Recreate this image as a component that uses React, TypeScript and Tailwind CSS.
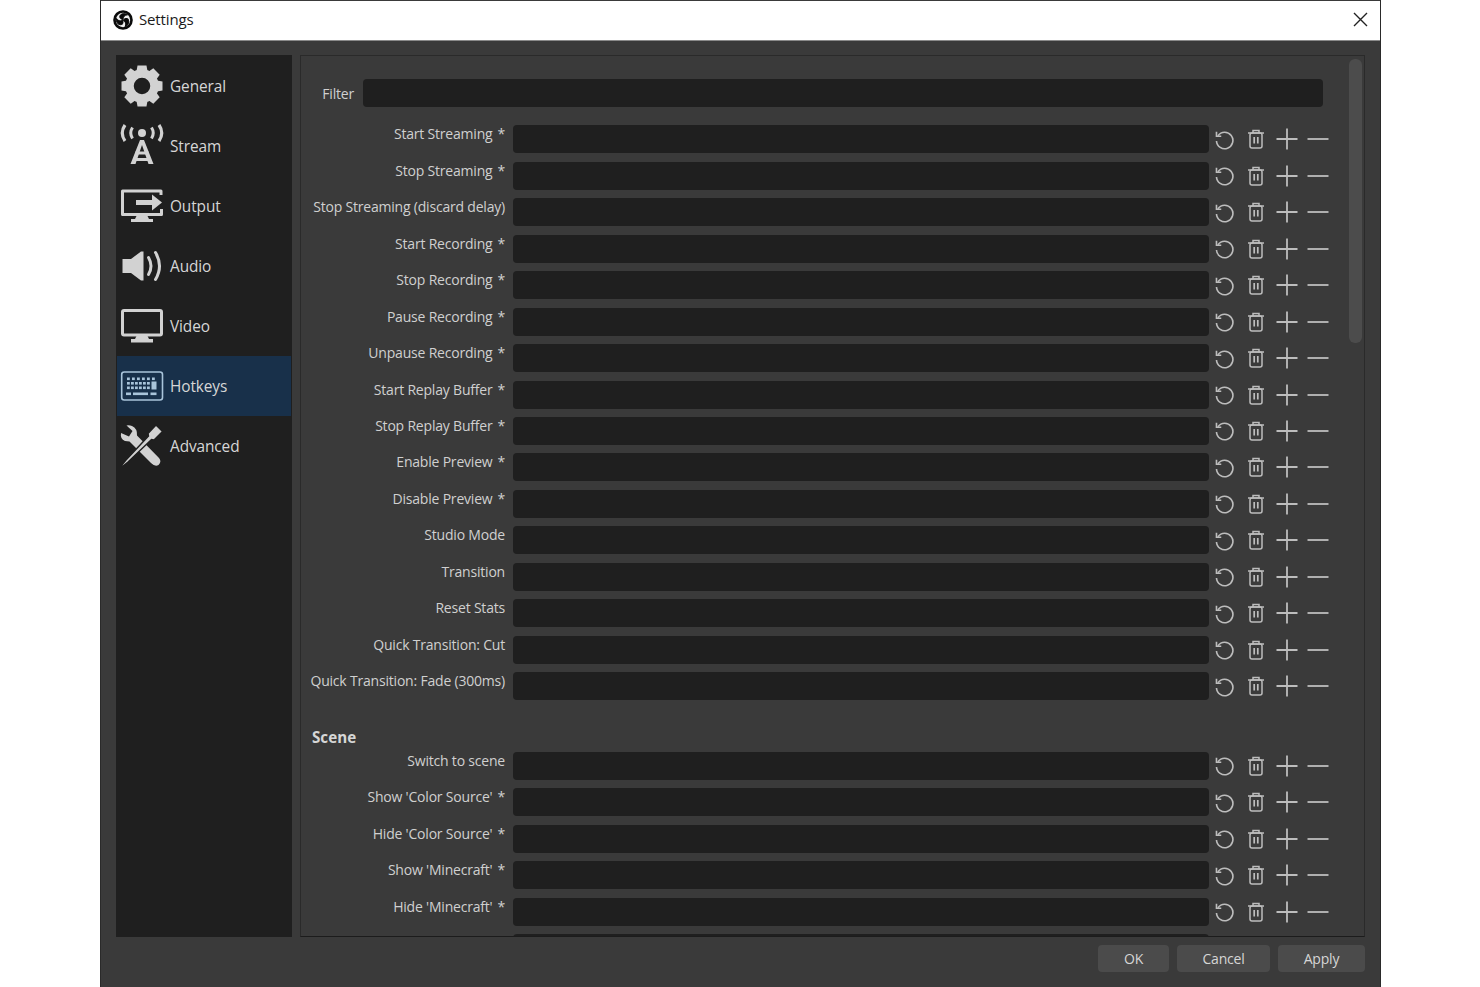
import React from "react";

const font = "font-['Open_Sans','Noto_Sans',sans-serif]";

function Gear() {
  const teeth = [0, 45, 90, 135, 180, 225, 270, 315];
  return (
    <svg width="44" height="44" viewBox="0 0 44 44" fill="#d2d2d2">
      {teeth.map((a) => (
        <path key={a} d="M17.5 1.5 H26.5 L28 10 H16 Z" transform={`rotate(${a} 22 22)`} />
      ))}
      <circle cx="22" cy="22" r="12.5" fill="none" stroke="#d2d2d2" strokeWidth="8.5" />
    </svg>
  );
}

function Stream() {
  return (
    <svg width="44" height="44" viewBox="0 0 44 44" fill="none" stroke="#d2d2d2" strokeWidth="3">
      <circle cx="22" cy="9" r="4" fill="#d2d2d2" stroke="none" />
      <path d="M12.5 3.5 Q9 9 12.5 14.5" />
      <path d="M31.5 3.5 Q35 9 31.5 14.5" />
      <path d="M5 1 Q-0.5 9 5 17" strokeWidth="3.2" />
      <path d="M39 1 Q44.5 9 39 17" strokeWidth="3.2" />
      <path d="M20 16 H24 L33.5 40 H28.5 L22 21 L15.5 40 H10.5 Z" fill="#d2d2d2" stroke="none" />
      <path d="M15.5 29 H28.5 M13 35.5 H31" strokeWidth="3" />
    </svg>
  );
}

function Output() {
  return (
    <svg width="44" height="36" viewBox="0 0 44 36" fill="none" stroke="#d2d2d2" strokeWidth="3">
      <path d="M41 7 V3 H2.5 V26.5 H41.5 V21" strokeLinejoin="round" />
      <path d="M16 12 H32 V6.5 L42 14.5 L32 22.5 V17 H16 Z" fill="#d2d2d2" stroke="none" />
      <path d="M17 27 H27 L29 31 H33 V34 H11 V31 H15 Z" fill="#d2d2d2" stroke="none" />
    </svg>
  );
}

function Audio() {
  return (
    <svg width="44" height="32" viewBox="0 0 44 32" fill="none" stroke="#d2d2d2" strokeWidth="3">
      <path d="M2.5 9 H11 L21 1.5 H23.5 V30.5 H21 L11 23 H2.5 Z" fill="#d2d2d2" stroke="none" />
      <path d="M28.5 7.5 Q33.5 16 28.5 24.5" strokeLinecap="round" />
      <path d="M35.5 2.5 Q43.5 16 35.5 29.5" strokeLinecap="round" />
    </svg>
  );
}

function Video() {
  return (
    <svg width="44" height="36" viewBox="0 0 44 36" fill="none" stroke="#d2d2d2" strokeWidth="3">
      <rect x="2.5" y="2.5" width="39" height="24.5" rx="1.5" />
      <path d="M17 27 H27 L29 31 H33 V34.5 H11 V31 H15 Z" fill="#d2d2d2" stroke="none" />
    </svg>
  );
}

function Keyboard() {
  const c = "#a9c4da";
  const rows = [
    { y: 6.5, xs: [7, 12, 17, 22, 27, 32] },
    { y: 11, xs: [7, 11, 15, 19, 23, 27] },
    { y: 15.5, xs: [7, 11, 15, 19, 23, 27] },
  ];
  return (
    <svg width="44" height="30" viewBox="0 0 44 30" fill={c}>
      <rect x="1.7" y="1" width="40.8" height="28" rx="2.5" fill="none" stroke={c} strokeWidth="1.6" />
      {rows.map((r) => r.xs.map((x) => <rect key={`${r.y}-${x}`} x={x} y={r.y} width="2.8" height="2.6" />))}
      <rect x="31.5" y="10.5" width="5" height="8" />
      <rect x="6" y="21.5" width="5" height="2.6" />
      <rect x="13" y="21.5" width="15" height="2.6" />
      <rect x="30.5" y="21.5" width="6" height="2.6" />
    </svg>
  );
}

function Advanced() {
  return (
    <svg width="44" height="44" viewBox="0 0 44 44" fill="#d2d2d2">
      <path d="M1 9 Q0 15 5 17 L9.5 17.5 L31 39 Q35 43 38.5 41 Q42 37.5 39 34 L17 11.5 Q17.5 4.5 12 2 Q9.5 1 6.5 1.5 L12.5 7 L9 12.5 Z" />
      <path d="M36 1 L42.5 7.5 L34 16 L31.5 15.5 L8 38 L2.5 42.5 L1.5 41.5 L6 36 L28.5 12 L28 9.5 Z" stroke="#1f1f1f" strokeWidth="1.4" />
    </svg>
  );
}

function ObsLogo() {
  const blade = "M10 9.6 C10.2 7 11.4 5.2 14.6 4.8 C12.4 3.2 8.6 3 7 5.6 C6 7.4 7.6 9.4 10 9.6 Z";
  return (
    <svg width="20" height="20" viewBox="0 0 20 20">
      <circle cx="10" cy="10" r="9.8" fill="#0b0b0b" />
      <circle cx="10" cy="10" r="7.2" fill="#f0f0f0" />
      {[0, 120, 240].map((a) => (
        <path key={a} d={blade} fill="#0b0b0b" stroke="#0b0b0b" strokeWidth="0.9" transform={`rotate(${a} 10 10)`} />
      ))}
    </svg>
  );
}

function RowIcons() {
  return (
    <div className="-ml-px flex h-7 w-[126px] shrink-0 items-center">
      <div className="flex w-[33px] justify-center">
        <svg width="21" height="21" viewBox="0 0 22 22" fill="none" stroke="#bdbdbd" strokeWidth="1.7">
          <path d="M4.2 7 A8.6 8.6 0 1 1 2.6 12.5" />
          <path d="M2.6 2.8 V7.6 H7.6" />
        </svg>
      </div>
      <div className="flex w-[30.5px] justify-center">
        <svg width="18" height="20" viewBox="0 0 18 20" fill="none" stroke="#bdbdbd" strokeWidth="1.5">
          <path d="M1 4 H17" />
          <path d="M6 4 V1.5 H12 V4" />
          <rect x="3" y="4" width="12" height="15" rx="2" />
          <path d="M7.2 8 V14.5 M10.8 8 V14.5" strokeWidth="1.7" />
        </svg>
      </div>
      <div className="flex w-[31.5px] justify-center">
        <svg width="22" height="22" viewBox="0 0 22 22" stroke="#bdbdbd" strokeWidth="1.8">
          <path d="M0.5 11 H21.5 M11 0.5 V21.5" />
        </svg>
      </div>
      <div className="flex w-[31.5px] justify-center">
        <svg width="22" height="22" viewBox="0 0 22 22" stroke="#bdbdbd" strokeWidth="1.8">
          <path d="M0.5 11 H21.5" />
        </svg>
      </div>
    </div>
  );
}

function Row({ label, star }: { label?: string; star?: boolean }) {
  return (
    <div className="flex h-[36.47px] items-center">
      <div className="-mt-[10px] w-[204px] shrink-0 whitespace-nowrap text-right text-[14px] leading-5 tracking-[-0.2px] text-[#d0d0d0]">
        {label}
        {star && <span className="ml-[5px]">*</span>}
      </div>
      <div className="ml-2 h-7 w-[696px] shrink-0 rounded-[4px] bg-[#1f1f1f]" />
      <RowIcons />
    </div>
  );
}

const nav = [
  { name: "General", icon: <Gear /> },
  { name: "Stream", icon: <Stream /> },
  { name: "Output", icon: <Output /> },
  { name: "Audio", icon: <Audio /> },
  { name: "Video", icon: <Video /> },
  { name: "Hotkeys", icon: <Keyboard />, active: true },
  { name: "Advanced", icon: <Advanced /> },
];

const general: [string, boolean][] = [
  ["Start Streaming", true],
  ["Stop Streaming", true],
  ["Stop Streaming (discard delay)", false],
  ["Start Recording", true],
  ["Stop Recording", true],
  ["Pause Recording", true],
  ["Unpause Recording", true],
  ["Start Replay Buffer", true],
  ["Stop Replay Buffer", true],
  ["Enable Preview", true],
  ["Disable Preview", true],
  ["Studio Mode", false],
  ["Transition", false],
  ["Reset Stats", false],
  ["Quick Transition: Cut", false],
  ["Quick Transition: Fade (300ms)", false],
];

const scene: [string, boolean][] = [
  ["Switch to scene", false],
  ["Show 'Color Source'", true],
  ["Hide 'Color Source'", true],
  ["Show 'Minecraft'", true],
  ["Hide 'Minecraft'", true],
];

export default function App() {
  return (
    <div className={`h-[987px] w-[1480px] overflow-hidden bg-white ${font}`}>
      <div className="ml-[100px] flex h-[987px] w-[1281px] flex-col border-x border-[#2a2a2a] bg-[#3a3a3a]">
        <div className="flex h-[41px] shrink-0 items-center justify-between border-y border-t-[#3a3a3a] border-b-[#8a8a8a] bg-white pb-[2px] pl-3 pr-[12px]">
          <div className="flex items-center gap-[6px]">
            <ObsLogo />
            <span className="text-[15px] tracking-[-0.15px] text-[#1a1a1a]">Settings</span>
          </div>
          <svg width="15" height="15" viewBox="0 0 15 15" stroke="#222" strokeWidth="1.4">
            <path d="M1 1 L14 14 M14 1 L1 14" />
          </svg>
        </div>

        <div className="flex h-[896px] shrink-0 pl-[15px] pr-[15px] pt-[14px]">
          <div className="h-[882px] w-[176px] shrink-0 bg-[#1f1f1f] py-px">
            {nav.map((n) => (
              <div
                key={n.name}
                className={`flex h-[60px] items-center ${n.active ? "mx-px bg-[#18304a]" : "mx-px"}`}
              >
                <div className="ml-[3px] flex w-[50px] shrink-0 items-center justify-start">{n.icon}</div>
                <span className="pt-[1px] text-[15.4px] tracking-[-0.1px] text-[#d6d6d6]">{n.name}</span>
              </div>
            ))}
          </div>

          <div className="ml-2 flex h-[882px] w-[1065px] shrink-0 overflow-hidden border border-[#2a2a2a] border-b-[#1c1c1c]">
            <div className="w-[1047px] shrink-0 overflow-hidden pt-[23px]">
              <div className="mb-[14px] flex h-7 items-center">
                <div className="w-[53px] shrink-0 text-right text-[14px] tracking-[-0.2px] text-[#d0d0d0]">Filter</div>
                <div className="ml-[9px] h-7 w-[960px] shrink-0 rounded-[4px] bg-[#1f1f1f]" />
              </div>
              {general.map(([l, s]) => (
                <Row key={l} label={l} star={s} />
              ))}
              <div className="mt-[22px] h-[21px] pl-[11px] text-[15.2px] font-bold leading-[21px] text-[#d6d6d6]">Scene</div>
              {scene.map(([l, s]) => (
                <Row key={l} label={l} star={s} />
              ))}
              <Row />
            </div>
            <div className="ml-[1px] mt-[3px] h-[284px] w-[13px] shrink-0 rounded-md bg-[#4c4c4c]" />
          </div>
        </div>

        <div className="flex justify-end gap-2 pr-[15px] pt-2">
          {[
            { t: "OK", w: "w-[71px]" },
            { t: "Cancel", w: "w-[93px]" },
            { t: "Apply", w: "w-[87px]" },
          ].map((b) => (
            <div
              key={b.t}
              className={`flex h-[27px] items-center justify-center rounded-[4px] bg-[#4b4b4b] text-[14px] tracking-[-0.2px] text-[#d6d6d6] ${b.w}`}
            >
              {b.t}
            </div>
          ))}
        </div>
      </div>
    </div>
  );
}
